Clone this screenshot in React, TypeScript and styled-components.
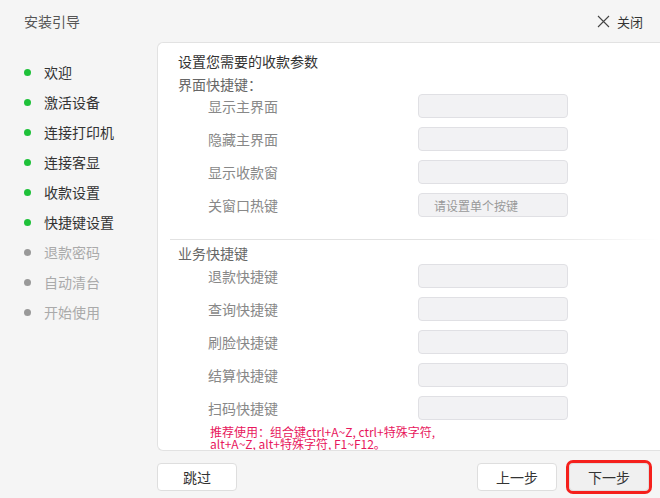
import styled, { createGlobalStyle } from "styled-components";

const GlobalStyle = createGlobalStyle`
  html, body {
    margin: 0;
    padding: 0;
    background: #f5f5f5;
  }
  * {
    box-sizing: border-box;
  }
`;

const steps = [
  { name: "欢迎", done: true },
  { name: "激活设备", done: true },
  { name: "连接打印机", done: true },
  { name: "连接客显", done: true },
  { name: "收款设置", done: true },
  { name: "快捷键设置", done: true },
  { name: "退款密码", done: false },
  { name: "自动清台", done: false },
  { name: "开始使用", done: false },
];

const screenKeys = [
  { label: "显示主界面" },
  { label: "隐藏主界面" },
  { label: "显示收款窗" },
  { label: "关窗口热键", placeholder: "请设置单个按键" },
];

const bizKeys = ["退款快捷键", "查询快捷键", "刷脸快捷键", "结算快捷键", "扫码快捷键"];

const App: React.FC = () => {
  return (
    <>
      <GlobalStyle />
      <Window>
        <Header>
          <Title>安装引导</Title>
          <CloseBtn>
            <svg width="13" height="13" viewBox="0 0 13 13">
              <path d="M1 1 L12 12 M12 1 L1 12" stroke="#444" strokeWidth="1.1" />
            </svg>
            关闭
          </CloseBtn>
        </Header>
        <Body>
          <Sidebar>
            {steps.map((s) => (
              <StepItem key={s.name} done={s.done}>
                <Dot done={s.done} />
                {s.name}
              </StepItem>
            ))}
          </Sidebar>
          <Main>
            <Panel>
              <Heading>设置您需要的收款参数</Heading>
              <SubHeading>界面快捷键：</SubHeading>
              {screenKeys.map((k) => (
                <Row key={k.label}>
                  <Label>{k.label}</Label>
                  <KeyInput readOnly placeholder={k.placeholder} />
                </Row>
              ))}
              <Divider />
              <SubHeading $tight>业务快捷键</SubHeading>
              {bizKeys.map((k) => (
                <Row key={k}>
                  <Label>{k}</Label>
                  <KeyInput readOnly />
                </Row>
              ))}
              <Note>
                <NoteLine>推荐使用：组合键ctrl+A~Z, ctrl+特殊字符,</NoteLine>
                <NoteLine>alt+A~Z, alt+特殊字符, F1~F12。</NoteLine>
              </Note>
            </Panel>
            <Footer>
              <Btn>跳过</Btn>
              <Spacer />
              <Btn>上一步</Btn>
              <Btn primary>下一步</Btn>
            </Footer>
          </Main>
        </Body>
      </Window>
    </>
  );
};

const Window = styled.div`
  width: 660px;
  height: 498px;
  background: #f5f5f5;
  font-family: "Microsoft YaHei", "Noto Sans CJK SC", "Liberation Sans", sans-serif;
  display: flex;
  flex-direction: column;
  overflow: hidden;
`;

const Header = styled.div`
  height: 42px;
  display: flex;
  align-items: center;
  padding: 0 17px 0 24px;
`;

const Title = styled.div`
  flex: 1;
  font-size: 14px;
  color: #555;
`;

const CloseBtn = styled.div`
  display: flex;
  align-items: center;
  gap: 7px;
  font-size: 13px;
  color: #333;
  cursor: pointer;
`;

const Body = styled.div`
  flex: 1;
  display: flex;
`;

const Sidebar = styled.div`
  width: 157px;
  padding: 15px 0 0 24px;
`;

const StepItem = styled.div<{ done: boolean }>`
  height: 30px;
  display: flex;
  align-items: center;
  gap: 13px;
  font-size: 14px;
  color: ${(p) => (p.done ? "#333" : "#aaa")};
`;

const Dot = styled.span<{ done: boolean }>`
  width: 7px;
  height: 7px;
  border-radius: 50%;
  background: ${(p) => (p.done ? "#1fc13a" : "#999")};
`;

const Main = styled.div`
  flex: 1;
  display: flex;
  flex-direction: column;
`;

const Panel = styled.div`
  height: 409px;
  background: #fff;
  border: 1px solid #e2e2e2;
  border-right: none;
  border-radius: 6px 0 0 6px;
  padding: 8px 0 0 20px;
  overflow: hidden;
`;

const Heading = styled.div`
  font-size: 14px;
  line-height: 20px;
  color: #333;
`;

const SubHeading = styled.div<{ $tight?: boolean }>`
  font-size: 14px;
  line-height: 20px;
  color: #666;
  margin: ${(p) => (p.$tight ? "3px 0 1px" : "3px 0 0")};
`;

const Row = styled.div`
  display: flex;
  align-items: center;
  height: 24px;
  margin-bottom: 9px;
`;

const Label = styled.div`
  width: 240px;
  padding-left: 30px;
  font-size: 14px;
  color: #888;
`;

const KeyInput = styled.input`
  width: 150px;
  height: 24px;
  border: 1px solid #e0e0e4;
  border-radius: 4px;
  background: #f2f2f4;
  font-family: inherit;
  font-size: 12px;
  padding: 0 15px;
  outline: none;
  &::placeholder {
    color: #999;
  }
`;

const Divider = styled.div`
  height: 1px;
  margin: 22px 0 0 -8px;
  background: linear-gradient(to right, #e2e2e2 0%, #e2e2e2 75%, rgba(226, 226, 226, 0) 100%);
`;

const Note = styled.div`
  margin: -3px 0 0 32px;
  font-size: 12px;
  color: #e8175d;
`;

const NoteLine = styled.div`
  height: 12px;
  line-height: 12px;
  white-space: nowrap;
`;

const Footer = styled.div`
  flex: 1;
  display: flex;
  align-items: flex-start;
  gap: 12px;
  padding: 12px 11px 0 0;
`;

const Spacer = styled.div`
  flex: 1;
`;

const Btn = styled.button<{ primary?: boolean }>`
  width: 80px;
  height: 28px;
  border: 1px solid #dedede;
  border-radius: 4px;
  background: ${(p) => (p.primary ? "#f0f0f0" : "#fff")};
  font-family: inherit;
  font-size: 14px;
  color: #333;
  cursor: pointer;
  outline: ${(p) => (p.primary ? "3px solid #f5201c" : "none")};
`;

export default App;
